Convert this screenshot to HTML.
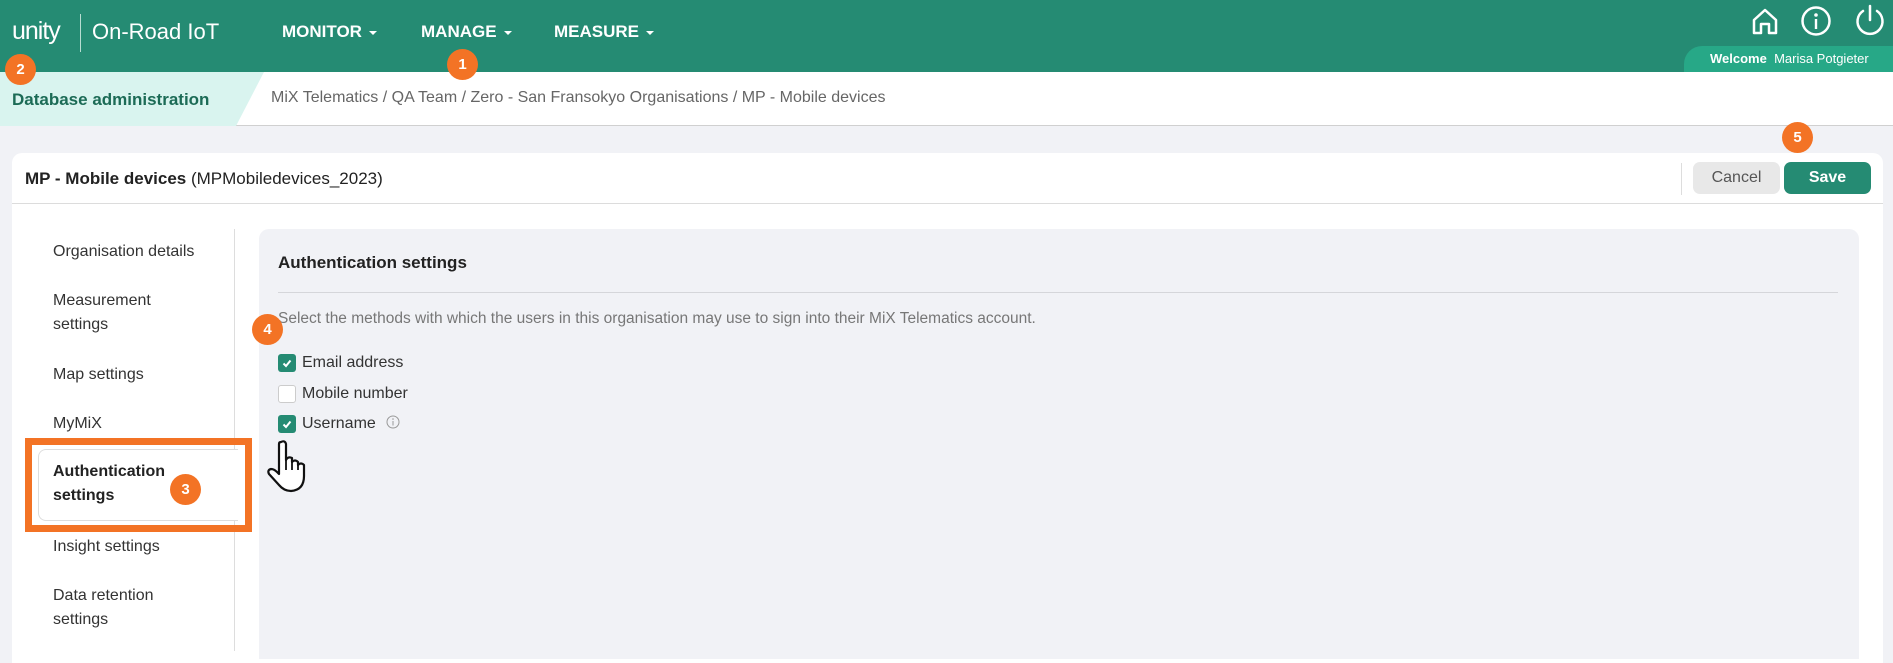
<!DOCTYPE html>
<html><head><meta charset="utf-8"><style>
*{margin:0;padding:0;box-sizing:border-box}
body{width:1893px;height:651px;overflow:hidden;background:#f1f2f6;font-family:"Liberation Sans",sans-serif;position:relative;color:#222}
.a{position:absolute;white-space:nowrap}
.hdr{left:0;top:0;width:1893px;height:72px;background:#258b73}
.nav{color:#fff;font-weight:bold;font-size:17px;top:22px}
.nav:after{content:"";display:inline-block;margin-left:7px;vertical-align:middle;border-left:4px solid transparent;border-right:4px solid transparent;border-top:4px solid #fff}
.badge{width:31px;height:31px;border-radius:50%;background:#f37325;color:#fff;font-weight:bold;font-size:15px;text-align:center;line-height:31px}
.ni{left:53px;font-size:16px;color:#333;line-height:24px}
.cb{left:278px;width:18px;height:18px;border-radius:3px;background:#258b73}
.cb svg{position:absolute;left:3px;top:3px}
.lbl{left:302px;font-size:16px;color:#333}
</style></head><body>
<div class="a hdr"></div>
<div class="a" style="left:12px;top:17px;color:#fff;font-size:25px;letter-spacing:-1px">unity</div>
<div class="a" style="left:80px;top:14px;width:1px;height:38px;background:#b8ddd2"></div>
<div class="a" style="left:92px;top:19px;color:#fff;font-size:22px">On-Road IoT</div>
<div class="a nav" style="left:282px">MONITOR</div>
<div class="a nav" style="left:421px">MANAGE</div>
<div class="a nav" style="left:554px">MEASURE</div>
<svg class="a" style="left:1749px;top:7px" width="32" height="28" viewBox="0 0 32 28"><path d="M5 13 L16 3 L27 13 V26 H20 V17 H12 V26 H5 Z" fill="none" stroke="#fff" stroke-width="2.5" stroke-linejoin="round"/></svg>
<svg class="a" style="left:1800px;top:5px" width="32" height="32" viewBox="0 0 32 32"><circle cx="16" cy="16" r="13.5" fill="none" stroke="#fff" stroke-width="2.5"/><circle cx="16" cy="10" r="1.8" fill="#fff"/><rect x="14.8" y="14" width="2.4" height="10" fill="#fff"/></svg>
<svg class="a" style="left:1853px;top:3px" width="34" height="34" viewBox="0 0 34 34"><path d="M10 8 A12.5 12.5 0 1 0 24 8" fill="none" stroke="#fff" stroke-width="2.5" stroke-linecap="round"/><path d="M17 3 V17" stroke="#fff" stroke-width="2.5" stroke-linecap="round"/></svg>
<div class="a" style="left:1684px;top:46px;width:215px;height:26px;background:#27a887;border-radius:18px 0 0 0"></div>
<div class="a" style="left:1710px;top:51px;color:#fff;font-size:13px"><b>Welcome</b>&nbsp; Marisa Potgieter</div>
<div class="a" style="left:0;top:72px;width:1893px;height:54px;background:#fff;border-bottom:1px solid #d0d0d0"></div>
<svg class="a" style="left:0;top:72px" width="265" height="54"><polygon points="0,0 264,0 236,54 0,54" fill="#d9f4ef"/></svg>
<div class="a" style="left:12px;top:90px;font-weight:bold;font-size:17px;color:#1c6b56">Database administration</div>
<div class="a" style="left:271px;top:89px;font-size:16px;color:#666">MiX Telematics / QA Team / Zero - San Fransokyo Organisations / MP - Mobile devices</div>
<div class="a badge" style="left:447px;top:49px">1</div>
<div class="a badge" style="left:5px;top:54px">2</div>
<div class="a" style="left:12px;top:153px;width:1871px;height:510px;background:#fff;border-radius:10px 10px 0 0"></div>
<div class="a" style="left:12px;top:203px;width:1871px;height:1px;background:#dcdcdc"></div>
<div class="a" style="left:25px;top:169px;font-size:17px"><b>MP - Mobile devices</b> (MPMobiledevices_2023)</div>
<div class="a" style="left:1681px;top:163px;width:1px;height:32px;background:#ddd"></div>
<div class="a" style="left:1693px;top:162px;width:87px;height:32px;border-radius:7px;background:#e8e8e8;color:#555;font-size:16px;text-align:center;line-height:32px">Cancel</div>
<div class="a" style="left:1784px;top:162px;width:87px;height:32px;border-radius:7px;background:#258b73;color:#fff;font-weight:bold;font-size:16px;text-align:center;line-height:32px">Save</div>
<div class="a badge" style="left:1782px;top:122px">5</div>
<div class="a" style="left:234px;top:229px;width:1px;height:422px;background:#ddd"></div>
<div class="a ni" style="top:240px">Organisation details</div>
<div class="a ni" style="top:289px">Measurement<br>settings</div>
<div class="a ni" style="top:363px">Map settings</div>
<div class="a ni" style="top:412px">MyMiX</div>
<div class="a" style="left:38px;top:449px;width:200px;height:72px;border:1px solid #ddd;border-right:none;border-radius:8px 0 0 8px;background:#fff"></div>
<div class="a ni" style="top:460px;font-weight:bold;color:#222">Authentication<br>settings</div>
<div class="a" style="left:25px;top:438px;width:227px;height:94px;border:7px solid #f37325"></div>
<div class="a badge" style="left:170px;top:474px">3</div>
<div class="a ni" style="top:535px">Insight settings</div>
<div class="a ni" style="top:584px">Data retention<br>settings</div>
<div class="a" style="left:259px;top:229px;width:1600px;height:430px;background:#f1f2f6;border-radius:10px 10px 0 0"></div>
<div class="a" style="left:278px;top:253px;font-size:17px;font-weight:bold;color:#222">Authentication settings</div>
<div class="a" style="left:278px;top:292px;width:1560px;height:1px;background:#d5d6da"></div>
<div class="a" style="left:278px;top:310px;font-size:15.5px;color:#777">Select the methods with which the users in this organisation may use to sign into their MiX Telematics account.</div>
<div class="a badge" style="left:252px;top:314px">4</div>
<div class="a cb" style="top:354px"><svg width="12" height="12"><path d="M2.5 6.5 L5 9 L9.5 3.5" fill="none" stroke="#fff" stroke-width="2"/></svg></div>
<div class="a lbl" style="top:354px">Email address</div>
<div class="a cb" style="top:385px;background:#fff;border:1px solid #ccc"></div>
<div class="a lbl" style="top:385px">Mobile number</div>
<div class="a cb" style="top:415px"><svg width="12" height="12"><path d="M2.5 6.5 L5 9 L9.5 3.5" fill="none" stroke="#fff" stroke-width="2"/></svg></div>
<div class="a lbl" style="top:415px">Username</div>
<svg class="a" style="left:386px;top:415px" width="14" height="14"><circle cx="7" cy="7" r="6" fill="none" stroke="#999"/><path d="M7 6 V10.5" stroke="#999"/><circle cx="7" cy="4" r=".8" fill="#999"/></svg>
<svg class="a" style="left:264px;top:438px" width="50" height="56" viewBox="0 0 50 56"><path d="M17 4 Q21 2 22 6 V22 Q24 18 28 20 V24 Q31 21 34 24 V27 Q37 24 40 27 V38 Q40 52 27 53 Q20 53 15 47 L5 36 Q3 32 7 31 Q10 31 13 34 L15 36 V6 Q15 4 17 4 Z" fill="#fff" stroke="#111" stroke-width="2.2" stroke-linejoin="round"/><path d="M22 22 V32 M28 24 V32 M34 27 V32" stroke="#111" stroke-width="1.8"/></svg>
</body></html>
